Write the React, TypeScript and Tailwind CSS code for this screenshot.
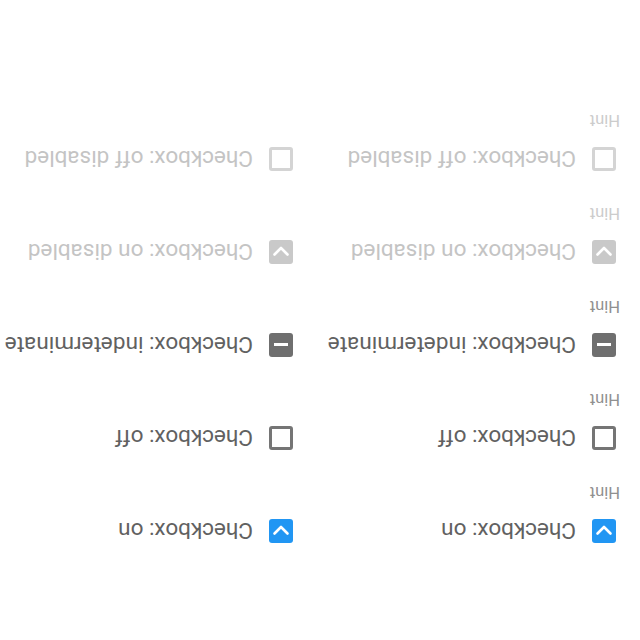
import type { ReactNode } from "react";

type State = "on" | "off" | "indeterminate";

const items: { label: string; state: State; disabled?: boolean }[] = [
  { label: "Checkbox: on", state: "on" },
  { label: "Checkbox: off", state: "off" },
  { label: "Checkbox: indeterminate", state: "indeterminate" },
  { label: "Checkbox: on disabled", state: "on", disabled: true },
  { label: "Checkbox: off disabled", state: "off", disabled: true },
];

function Box({ state, disabled }: { state: State; disabled?: boolean }) {
  if (state === "off") {
    return (
      <span
        className={`block h-6 w-6 shrink-0 rounded-[3px] border-[3px] ${
          disabled ? "border-[#d4d4d4]" : "border-[#757575]"
        }`}
      />
    );
  }
  const fill =
    state === "indeterminate"
      ? "bg-[#6f6f6f]"
      : disabled
        ? "bg-[#c9c9c9]"
        : "bg-[#2196f3]";
  return (
    <span className={`flex h-6 w-6 shrink-0 items-center justify-center rounded-[3px] ${fill}`}>
      {state === "on" ? (
        <svg viewBox="0 0 24 24" className="h-6 w-6" fill="none">
          <path d="M5.5 9.5l6.5 6.5 6.5-6.5" stroke="white" strokeWidth="2.6" strokeLinecap="round" strokeLinejoin="round" />
        </svg>
      ) : (
        <span className="block h-[3px] w-[14px] bg-white" />
      )}
    </span>
  );
}

function Item({
  label,
  state,
  disabled,
  hint,
}: {
  label: string;
  state: State;
  disabled?: boolean;
  hint?: ReactNode;
}) {
  return (
    <div className="flex h-[93px] flex-col">
      <div className="flex h-6 items-center gap-4">
        <Box state={state} disabled={disabled} />
        <span
          className={`whitespace-nowrap text-[22.5px] leading-6 ${
            disabled ? "text-[#c4c4c4]" : "text-[#616161]"
          }`}
        >
          {label}
        </span>
      </div>
      {hint && (
        <span
          className={`-ml-1 mt-[17px] text-[16.5px] leading-5 ${
            disabled ? "text-[#cccccc]" : "text-[#909090]"
          }`}
        >
          {hint}
        </span>
      )}
    </div>
  );
}

export default function App() {
  return (
    <div className="h-[640px] w-[640px] rotate-180 overflow-hidden bg-white font-['Roboto',sans-serif]">
      <div className="grid grid-cols-[323px_1fr] pl-6 pt-[97px]">
        <div>
          {items.map((it) => (
            <Item key={it.label} {...it} hint="Hint" />
          ))}
        </div>
        <div>
          {items.map((it) => (
            <Item key={it.label} {...it} />
          ))}
        </div>
      </div>
    </div>
  );
}
